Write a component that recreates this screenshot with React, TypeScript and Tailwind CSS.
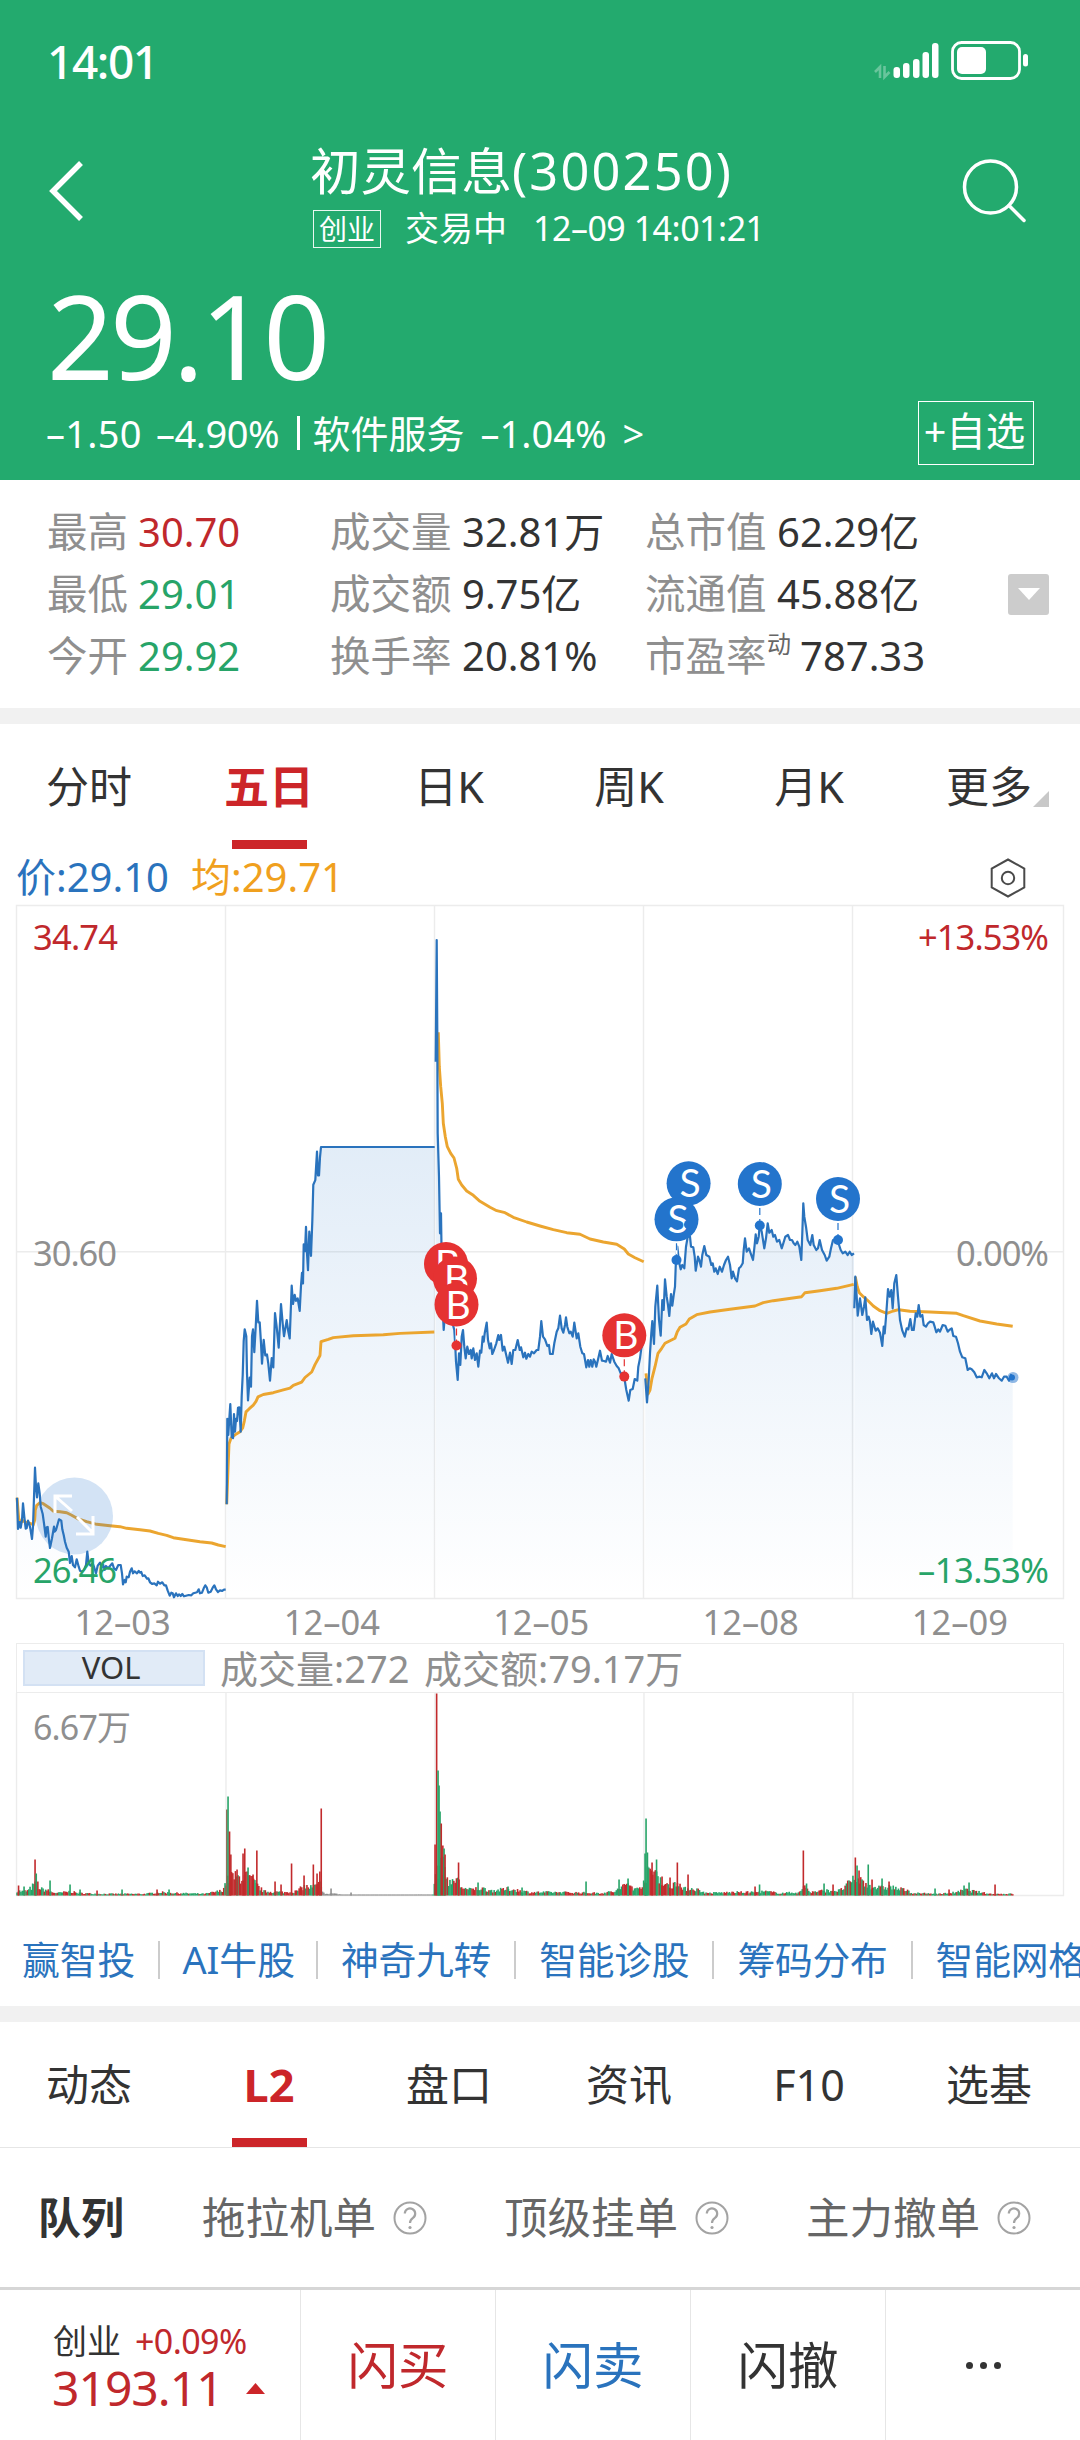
import React from 'react';

type Pt = [number, number];

/** Turns "x,y x,y" samples into page points with an origin and a scale. */
function parse(samples: string, ox: number, oy: number, sx = 3, sy = 3): Pt[] {
  return samples
    .trim()
    .split(/\s+/)
    .map((p) => {
      const [x, y] = p.split(',').map(Number);
      return [ox + x / sx, oy + y / sy] as Pt;
    });
}

const toPath = (pts: Pt[]) => 'M' + pts.map(([x, y]) => `${x.toFixed(1)} ${y.toFixed(1)}`).join('L');

const TOP = 904;
const BOTTOM = 1598.5;

const prices: Pt[][] = [
  parse(
    '51,293 54,387 59,366 62,383 66,360 69,310 73,350 77,386 80,384 84,362 88,372 91,385 96,417 99,380 105,203 108,260 111,292 115,250 119,280 122,320 128,342 132,370 137,410 140,382 143,381 147,420 150,444 156,415 162,380 164,395 168,390 173,372 177,358 184,362 187,388 191,405 195,425 200,443 206,455 210,489 215,468 219,495 225,502 230,478 236,500 240,512 246,515 252,510 258,495 262,455 266,490 272,497 278,490 283,503 288,520 293,497 300,488 305,503 310,495 314,510 318,498 324,505 330,498 337,490 342,505 348,510 355,495 362,495 366,520 369,553 374,540 377,547 380,530 386,532 390,515 395,505 399,520 404,514 411,520 416,513 420,518 424,516 428,528 434,526 441,536 445,535 450,547 457,552 463,550 470,556 474,545 480,551 487,547 493,556 498,556 503,572 509,587 514,578 518,580 522,592 528,580 533,588 537,583 542,588 547,582 552,589 558,587 566,585 574,586 580,580 586,578 591,577 596,568 600,580 606,578 611,565 616,556 620,562 625,578 632,575 638,563 643,556 648,568 654,576 660,571 666,573 672,569 677,569',
    0, 1400,
  ),
  parse(
    '680,1316 682,1130 685,1165 688,1130 691,1098 695,1170 699,1172 702,1120 705,1158 708,1130 711,1135 714,1106 718,1105 722,1158 725,1080 728,1035 731,960 734,935 739,950 741,1030 744,1090 749,1040 753,1060 756,950 759,935 763,985 767,930 771,873 775,920 779,920 783,965 786,1010 791,958 796,992 801,990 805,1010 810,1047 815,998 820,1018 825,900 830,930 836,975 843,880 849,930 852,950 860,915 865,940 869,955 875,840 879,880 884,860 888,873 893,868 899,895 903,840 906,812 909,835 911,750 915,765 918,712 921,770 924,806 928,722 933,775 937,700 940,620 946,610 951,548 954,600 957,600 960,560 963,538 1304,538',
    0, 900, 3, 2.178,
  ),
  parse(
    '47,485 50,120 52,400 53,700 57,830 60,1000 63,940 65,1080 67,1200 71,1290 75,1240 85,1230 95,1260 103,1290 106,1340 108,1385 113,1440 117,1360 121,1395 125,1310 129,1290 133,1340 137,1375 142,1340 147,1362 152,1350 155,1375 160,1345 165,1380 170,1360 175,1400 180,1352 184,1358 188,1310 191,1325 194,1300 200,1268 204,1320 209,1345 213,1330 217,1362 222,1350 229,1330 235,1305 238,1320 243,1305 248,1352 253,1340 258,1362 264,1388 270,1358 275,1392 280,1350 286,1350 293,1320 299,1350 303,1342 310,1372 315,1358 319,1376 325,1362 330,1370 335,1355 342,1360 350,1350 355,1350 360,1310 364,1263 369,1310 375,1318 382,1338 387,1335 390,1362 398,1362 403,1330 410,1295 415,1285 420,1247 425,1285 430,1298 435,1275 438,1252 442,1280 448,1300 452,1295 458,1310 463,1268 470,1315 475,1300 481,1340 487,1360 492,1362 499,1402 504,1380 508,1400 512,1380 517,1400 521,1378 525,1385 529,1400 535,1375 540,1352 546,1382 552,1383 558,1385 563,1368 570,1388 575,1362 583,1385 590,1398 596,1405 602,1420 608,1420 614,1440 619,1470 626,1502 631,1470 638,1467 644,1437 652,1442 655,1400 660,1375 664,1345 669,1330',
    420, 900,
  ),
  parse(
    '46,715 51,787 56,720 60,640 64,580 67,543 72,612 76,500 82,437 87,540 92,587 97,480 101,510 105,418 110,470 114,495 118,528 123,462 127,497 131,465 135,440 137,380 139,355 142,320 147,365 152,388 157,375 163,385 168,320 173,290 180,290 183,320 190,322 194,350 197,392 204,350 208,360 213,380 217,345 223,318 229,345 238,350 244,375 248,370 253,395 257,385 263,402 269,380 276,395 282,375 288,360 294,350 300,375 305,415 309,395 315,415 321,424 327,385 332,380 338,370 341,330 345,295 350,335 357,325 362,340 369,360 373,325 377,283 381,310 386,290 389,256 395,275 403,325 408,295 413,250 418,278 425,270 430,290 435,285 441,305 448,300 455,325 460,310 466,290 474,285 480,300 486,300 491,310 496,315 502,305 508,320 514,360 517,280 520,190 523,230 528,260 533,300 541,315 547,285 551,315 559,330 564,325 569,300 576,330 584,345 590,362 598,350 603,325 609,300 618,300 624,305 632,330 638,340 646,335 653,345 659,335 665,345 672,340',
    630, 1140,
  ),
  parse(
    '673,505 676,410 680,470 683,527 690,475 697,525 702,500 706,472 711,540 716,530 720,545 724,582 729,545 737,572 743,565 750,578 757,618 761,560 764,580 769,520 774,447 779,470 784,450 788,505 793,430 799,405 804,470 810,540 817,572 824,590 830,565 835,568 841,537 846,570 851,570 857,520 862,530 866,495 871,530 877,525 881,555 888,560 894,550 900,545 910,547 914,560 919,577 925,568 930,575 938,555 946,557 953,575 958,570 965,565 970,588 978,590 984,610 990,635 997,652 1006,655 1013,690 1019,685 1025,688 1033,697 1040,712 1049,710 1055,712 1063,690 1070,700 1078,715 1086,700 1092,715 1098,702 1107,715 1115,722 1122,710 1130,710 1137,722 1143,705 1148,712',
    630, 1140,
  ),
];

const averages: Pt[][] = [
  parse(
    '51,293 56,355 62,368 70,362 80,368 90,370 100,374 104,360 106,330 110,316 120,308 130,311 140,318 150,325 160,334 180,335 200,338 215,346 235,357 260,365 290,373 330,377 360,380 380,385 420,389 450,393 475,400 500,406 520,413 550,418 600,425 635,429 655,435 677,440',
    0, 1400,
  ),
  parse(
    '680,1316 684,1240 687,1185 693,1172 705,1165 720,1158 728,1150 733,1135 738,1115 748,1108 760,1100 768,1092 774,1082 790,1077 820,1073 850,1067 870,1063 880,1057 905,1050 915,1040 935,1028 945,1012 960,992 963,962 985,957 1000,953 1060,949 1150,947 1200,944 1303,941',
    0, 900, 3, 2.178,
  ),
  parse(
    '55,397 58,500 62,560 67,610 70,670 76,710 82,740 92,760 102,774 110,805 115,838 125,855 140,873 160,886 180,904 210,922 230,932 255,938 280,952 320,966 360,978 400,989 440,998 480,1003 510,1017 550,1026 590,1033 613,1047 625,1062 645,1073 671,1085',
    420, 900,
  ),
  parse(
    '48,700 54,762 60,750 66,715 75,680 84,640 95,625 105,610 120,602 135,595 142,575 150,562 168,552 178,537 200,524 240,516 300,508 375,498 400,488 430,482 515,470 525,458 570,452 620,445 671,433',
    630, 1140,
  ),
  parse(
    '676,410 682,440 688,458 700,470 715,483 730,498 750,512 770,520 790,513 806,509 840,514 900,516 980,520 1000,527 1050,543 1100,552 1148,559',
    630, 1140,
  ),
];

const DAY_LINES = [225.5, 434.5, 643.5, 852.5];

function Marker({ x, y, label, dotY }: { x: number; y: number; label: 'B' | 'S'; dotY?: number }) {
  const color = label === 'B' ? '#e53232' : '#2374cc';
  return (
    <g>
      {dotY !== undefined && (
        <>
          <line x1={x} x2={x} y1={y + 22} y2={dotY} stroke="#fff" strokeWidth="2" />
          <line x1={x} x2={x} y1={y + 24} y2={dotY} stroke={color} strokeWidth="1.2" strokeDasharray="7 4" />
          <circle cx={x} cy={dotY} r="5" fill={color} />
        </>
      )}
      <circle cx={x} cy={y} r="22" fill={color} />
      <text x={x + 1.5} y={y + 14} textAnchor="middle" fontSize="39" fontFamily="Lato, sans-serif" fill="#fff">
        {label}
      </text>
    </g>
  );
}

function PriceChart() {
  return (
    <svg width="1080" height="696" viewBox="0 904 1080 696" className="block">
      <defs>
        <linearGradient id="area" gradientUnits="userSpaceOnUse" x1="0" y1="940" x2="0" y2={BOTTOM}>
          <stop offset="0" stopColor="#2374c8" stopOpacity="0.18" />
          <stop offset="0.3" stopColor="#2374c8" stopOpacity="0.135" />
          <stop offset="0.7" stopColor="#2374c8" stopOpacity="0.06" />
          <stop offset="1" stopColor="#2374c8" stopOpacity="0" />
        </linearGradient>
      </defs>
      <g stroke="#ececec" strokeWidth="1.4" fill="none">
        <path d={`M16.5 ${TOP + 1.5}H1063.5V${BOTTOM}H16.5ZM16.5 1251.7H1063`} />
        {DAY_LINES.map((x) => (
          <line key={x} x1={x} x2={x} y1={TOP + 1} y2={BOTTOM} />
        ))}
      </g>
      {prices.map((p, i) => (
        <path key={i} fill="url(#area)" d={`${toPath(p)}L${p[p.length - 1][0]} ${BOTTOM}L${p[0][0]} ${BOTTOM}Z`} />
      ))}
      {averages.map((p, i) => (
        <path key={i} d={toPath(p)} fill="none" stroke="#eba52f" strokeWidth="2.9" strokeLinejoin="round" />
      ))}
      <circle cx="74.5" cy="1516" r="38.5" fill="#2374cc" fillOpacity="0.2" />
      {prices.map((p, i) => (
        <path key={i} d={toPath(p)} fill="none" stroke="#2a73bd" strokeWidth="2.2" strokeLinejoin="round" />
      ))}
      <path d="M72 1511L55 1496M55 1513V1496H72M77 1517L93 1533M93 1516V1534H76" fill="none" stroke="#fff" strokeWidth="3" />

      <g fontSize="34.5" className="font-['Noto_Sans',sans-serif]">
        <text x="33" y="949.5" fill="#c0282c" textLength="85">34.74</text>
        <text x="33" y="1266" fill="#8f8f8f" textLength="84">30.60</text>
        <text x="33" y="1583" fill="#27a468" textLength="84">26.46</text>
        <text x="918" y="949.5" fill="#c0282c" textLength="131">+13.53%</text>
        <text x="956" y="1266" fill="#8f8f8f" textLength="93">0.00%</text>
        <text x="918" y="1583" fill="#27a468" textLength="131">–13.53%</text>
      </g>

      <Marker x={446} y={1264} label="B" />
      <Marker x={455} y={1278.5} label="B" />
      <Marker x={456.5} y={1304.5} label="B" dotY={1345.5} />
      <Marker x={624.3} y={1335.3} label="B" dotY={1376.6} />
      <Marker x={688.6} y={1183.3} label="S" />
      <Marker x={676.5} y={1219.3} label="S" dotY={1260} />
      <circle cx="688.5" cy="1224.5" r="4.5" fill="#2374cc" />
      <Marker x={759.8} y={1184} label="S" dotY={1225.5} />
      <Marker x={838} y={1199} label="S" dotY={1240} />
      <circle cx="1013" cy="1377.5" r="5.5" fill="#2374cc" fillOpacity="0.5" />
      <circle cx="1012" cy="1377.5" r="3" fill="#2374cc" />
    </svg>
  );
}

const RED = '#c22a2c';
const GREEN = '#27a468';
const GRAY = '#8f8f8f';

/** Typical volume by horizontal position; single-minute spikes are listed apart. */
const envelope: Pt[] = [
  [17, 6], [22, 5], [28, 6], [34, 13], [38, 14], [40, 8], [46, 7], [52, 4], [58, 3], [70, 5], [78, 3], [100, 2], [145, 2],
  [160, 4], [175, 3], [205, 2], [222, 6], [226, 16], [231, 24], [238, 22], [246, 24], [252, 19], [258, 11], [264, 5],
  [285, 4], [296, 5], [304, 11], [312, 10], [320, 14], [322, 5], [323, 3], [335, 2], [345, 1], [433, 1], [434, 18],
  [441, 42], [444, 34], [448, 19], [453, 15], [457, 24], [460, 12], [468, 7], [480, 9], [492, 6], [510, 8], [530, 4],
  [560, 4], [600, 3], [615, 5], [628, 15], [636, 7], [642, 14], [648, 28], [657, 30], [662, 16], [670, 10], [678, 20],
  [682, 7], [688, 9], [696, 8], [706, 3], [735, 4], [755, 4], [765, 5], [780, 3], [800, 4], [805, 13], [810, 4],
  [825, 6], [840, 6], [852, 18], [860, 19], [868, 13], [880, 9], [890, 11], [898, 8], [905, 7], [912, 3], [940, 2],
  [957, 4], [965, 7], [975, 5], [990, 2], [1013, 2],
];

const spikes: [number, number, string][] = [
  [18.5, 10, RED], [24, 9, GREEN], [35, 36, RED], [36.2, 22, GREEN], [50, 15, GREEN], [70, 11, GREEN], [80, 6, GREEN], [97, 5, RED],
  [122, 6, GREEN], [157, 6, RED], [169, 6, GREEN], [226.8, 86, '#8d6b52'], [228, 99, GREEN], [229.5, 64, RED], [230.8, 41, RED],
  [237, 26, RED], [243, 42, RED], [244.7, 47, RED], [248, 28, GREEN], [253, 21, RED], [256.8, 45, RED], [275, 14, RED], [281, 11, RED],
  [291.5, 32, RED], [304, 20, RED], [313.3, 31, RED], [317, 22, RED], [319.8, 24, RED], [321.2, 87, RED], [331, 7, GRAY], [351, 3, GRAY],
  [435, 51, RED], [436.6, 202, RED], [438, 125, GREEN], [439, 110, GREEN], [440, 84, GREEN], [441.2, 72, RED], [442.8, 50, RED],
  [444, 47, GREEN], [445, 41, RED], [458.5, 33, RED], [478, 13, GREEN], [508, 9, GREEN], [522, 8, GREEN], [586, 14, GREEN],
  [619, 16, GREEN], [628, 17, GREEN], [645, 42, GREEN], [646, 77, GREEN], [647.4, 43, GREEN], [652, 33, RED], [656.5, 36, GREEN],
  [662, 19, RED], [670, 18, RED], [677.3, 33, RED], [688, 21, RED], [755, 9, RED], [759.5, 11, GREEN], [803.3, 45, RED], [806.5, 12, GREEN],
  [824, 12, GREEN], [833, 11, RED], [855.3, 38, RED], [857, 30, GREEN], [859, 25, RED], [868.2, 31, GREEN], [872, 16, RED],
  [882, 17, GREEN], [889, 14, RED], [935, 7, GREEN], [949, 6, RED], [964, 10, GREEN], [969, 13, GREEN], [995, 11, RED],
];

function volumeBars() {
  const out: { x: number; h: number; c: string }[] = [];
  let seed = 7;
  const rnd = () => (seed = (seed * 16807) % 2147483647) / 2147483647;
  let seg = 0;
  for (let x = 17; x < 1013; x += 1.3) {
    while (seg < envelope.length - 2 && envelope[seg + 1][0] < x) seg++;
    const [x0, y0] = envelope[seg];
    const [x1, y1] = envelope[seg + 1];
    const base = y0 + ((y1 - y0) * (x - x0)) / (x1 - x0);
    const h = Math.max(1, base * (0.5 + 0.6 * rnd()));
    const upBias = (x > 226 && x < 260) || (x > 647 && x < 680) ? 0.72 : 0.45;
    const c = x > 322 && x < 433 ? GRAY : rnd() < upBias ? RED : GREEN;
    out.push({ x, h, c });
  }
  spikes.forEach(([x, h, c]) => out.push({ x, h, c }));
  return out;
}

function VolumeChart() {
  return (
    <svg width="1080" height="204" viewBox="0 1693 1080 204" className="block">
      <g stroke="#ececec" strokeWidth="1.4">
        {[16.5, ...DAY_LINES.map((x) => x + 0.5), 1063.5].map((x) => (
          <line key={x} x1={x} x2={x} y1="1693" y2="1896" />
        ))}
        <line x1="16" x2="1064" y1="1895.5" y2="1895.5" />
      </g>
      {volumeBars().map((b, i) => (
        <rect key={i} x={b.x - 0.75} y={1895.5 - b.h} width="1.6" height={b.h} fill={b.c} />
      ))}
      <text x="33" y="1740" fontSize="34" fill="#8f8f8f" textLength="98" className="font-['Noto_Sans','Noto_Sans_CJK_SC',sans-serif]">
        6.67万
      </text>
    </svg>
  );
}

function StatusIcons() {
  return (
    <svg width="156" height="46" viewBox="872 38 156 46">
      <g fill="#fff">
        <g fill="none" stroke="#fff" strokeWidth="2.6" strokeOpacity="0.32">
          <path d="M875 72L880 67V78M889.500 72L884.500 77V66" />
        </g>
        <rect x="893.500" y="67" width="6.500" height="11" rx="3" />
        <rect x="903" y="63" width="6.500" height="15" rx="3" />
        <rect x="913" y="59" width="6.500" height="19" rx="3" />
        <rect x="922.500" y="52" width="6.500" height="26" rx="3" />
        <rect x="932" y="43" width="6.500" height="35" rx="3" />
        <rect x="957" y="47" width="29" height="27" rx="5" />
        <rect x="1023" y="54" width="5" height="12.500" rx="2.500" />
      </g>
      <rect x="952.500" y="42.500" width="67" height="36" rx="9" fill="none" stroke="#fff" strokeWidth="2.800" />
    </svg>
  );
}

function Help() {
  return (
    <svg width="34" height="34" viewBox="0 0 34 34" fill="none" stroke="#a3a3a3" strokeWidth="2">
      <circle cx="17" cy="17" r="15.500" />
      <path d="M11.800 12.500a5.200 5.200 0 1 1 8.200 4.300c-2 1.400-3 2.300-3 5.200" strokeWidth="2.200" />
      <circle cx="17" cy="26.500" r="1.600" fill="#a3a3a3" stroke="none" />
    </svg>
  );
}

const periodTabs = ['分时', '五日', '日K', '周K', '月K', '更多'];
const infoTabs = ['动态', 'L2', '盘口', '资讯', 'F10', '选基'];

function Tabs({ items, active, className }: { items: string[]; active: number; className: string }) {
  return (
    <nav className={`grid grid-cols-6 text-center text-[43px] text-[#333] ${className}`}>
      {items.map((t, i) => (
        <div key={t} className="relative flex items-center justify-center pr-[2px] pb-[1px]">
          {i === active ? <b className="text-[45px] font-bold text-[#cc2529]">{t}</b> : <span>{t}</span>}
          {i === active && <i className="absolute bottom-0 left-[52px] h-[9px] w-[75px] bg-[#cc2529]" />}
          {t === '更多' && (
            <svg className="absolute top-[67px] left-[133px]" width="16" height="16">
              <path d="M16 0V16H0Z" fill="#c8c8c8" />
            </svg>
          )}
        </div>
      ))}
    </nav>
  );
}

const stats = [
  ['最高', '30.70', '成交量', '32.81万', '总市值', '62.29亿'],
  ['最低', '29.01', '成交额', '9.75亿', '流通值', '45.88亿'],
  ['今开', '29.92', '换手率', '20.81%', '市盈率', '787.33'],
];

const links = ['赢智投', 'AI牛股', '神奇九转', '智能诊股', '筹码分布', '智能网格'];

export default function App() {
  return (
    <div className="flex h-[2440px] w-[1080px] flex-col overflow-hidden bg-white font-['Noto_Sans','Noto_Sans_CJK_SC',sans-serif] leading-none whitespace-nowrap">
      <header className="flex h-[480px] shrink-0 flex-col bg-[#23aa6e] text-white">
        <div className="flex h-[122px] items-center justify-between pr-[52px] pl-[47px]">
          <span className="text-[46px] font-medium tracking-[-1.400px]">14:01</span>
          <StatusIcons />
        </div>

        <div className="flex h-[136px] items-start">
          <svg className="mt-[38px] ml-[47px] shrink-0" width="38" height="62" viewBox="0 0 38 62">
            <path d="M34 3L6 31L34 59" fill="none" stroke="#fff" strokeWidth="5.500" />
          </svg>
          <div className="ml-[225px] w-[460px] shrink-0">
            <div className="mt-[23px] flex h-[52px] items-center text-[50.500px]">
              <span>初灵信息</span>
              <span className="tracking-[2.200px]">(300250)</span>
            </div>
            <div className="mt-[10px] flex h-[44px] items-center text-[34px]">
              <span className="ml-[3px] flex h-[38px] w-[68px] items-center justify-center border border-white/90 pb-[1px] text-[28px]">创业</span>
              <span className="ml-[24px] pb-[2px]">交易中</span>
              <span className="ml-[26px] pb-[2px] tracking-[-0.500px]">12–09 14:01:21</span>
            </div>
          </div>
          <svg className="mt-[34px] ml-[188px] shrink-0" width="68" height="70" viewBox="958 156 68 70">
            <g fill="none" stroke="#fff" strokeWidth="3.500">
              <circle cx="990.500" cy="187" r="26" />
              <path d="M1009 205.500L1024 220.500" strokeLinecap="round" />
            </g>
          </svg>
        </div>

        <div className="flex h-[142px] items-center pt-[11px] pl-[47px]">
          <span className="text-[117px] tracking-[-4px]">29.10</span>
        </div>

        <div className="flex h-[66px] items-center text-[38px]">
          <span className="ml-[46px] w-[110px] tracking-[0.300px]">–1.50</span>
          <span className="w-[141px] tracking-[-0.500px]">–4.90%</span>
          <i className="mr-[13px] h-[34px] w-[2.500px] bg-white" />
          <span className="w-[168px]">软件服务</span>
          <span className="w-[142px]">–1.04%</span>
          <span className="w-[295px]">&gt;</span>
          <span className="flex h-[64px] w-[116px] items-center justify-center border border-white pr-[2px] pb-[2px] text-[39.500px]">+自选</span>
        </div>
      </header>

      <section className="flex h-[228px] shrink-0 items-center">
        <div className="flex w-[1008px] shrink-0 flex-col text-[40px] text-[#333]">
          {stats.map((r, i) => (
            <div key={r[0]} className="flex h-[62px] items-center pl-[47px]">
              <span className="w-[91px] text-[40.500px] text-[#8f8f8f]">{r[0]}</span>
              <span className={`w-[192px] ${i === 0 ? 'text-[#c0282c]' : 'text-[#27a468]'}`}>{r[1]}</span>
              <span className="w-[132px] text-[40.500px] text-[#8f8f8f]">{r[2]}</span>
              <span className="w-[183px]">{r[3]}</span>
              <span className="w-[122px] text-[40.500px] text-[#8f8f8f]">{r[4]}</span>
              {i === 2 && <sup className="top-0 mb-[24px] w-[23px] text-[24px] text-[#666]">动</sup>}
              <span className="ml-[10px]">{r[5]}</span>
            </div>
          ))}
        </div>
        <div className="flex h-[41px] w-[41px] items-center justify-center rounded-[3px] bg-[#ccc]">
          <svg width="22" height="12" viewBox="0 0 22 12">
            <path d="M0 0H22L11 12Z" fill="#fff" />
          </svg>
        </div>
      </section>
      <div className="h-4 shrink-0 bg-[#f1f1f1]" />

      <Tabs items={periodTabs} active={1} className="h-[125px] shrink-0" />

      <div className="flex h-[55px] shrink-0 items-center text-[40px]">
        <span className="ml-[16px] w-[175px] text-[#2a73bd]">价:29.10</span>
        <span className="w-[795px] text-[#f0a01e]">均:29.71</span>
        <svg width="44" height="44" viewBox="0 0 44 44" fill="none" stroke="#4a4a4a" strokeWidth="2">
          <path d="M22 4.500L38.300 13.500V32.500L22 41.500L5.700 32.500V13.500Z" />
          <circle cx="22" cy="23" r="6.200" />
        </svg>
      </div>

      <PriceChart />
      <div className="flex h-[43px] shrink-0 items-center pl-[18px] text-[34.500px] text-[#8f8f8f]">
        {['12–03', '12–04', '12–05', '12–08', '12–09'].map((d) => (
          <span key={d} className="w-[209.300px] pt-px text-center">{d}</span>
        ))}
      </div>

      <div className="ml-4 flex h-[50px] w-[1048px] shrink-0 items-center border-[1.500px] border-[#ececec] text-[38px] text-[#8f8f8f]">
        <span className="ml-[6px] flex h-[36px] w-[182px] items-center justify-center border-2 border-[#d3e1f3] bg-[#e1ebf7] pr-[6px] pb-[1px] text-[31px] text-[#333]">VOL</span>
        <span className="ml-[15px] w-[204px]">成交量:272</span>
        <span>成交额:79.17万</span>
      </div>
      <VolumeChart />

      <div className="flex h-[109px] shrink-0 items-center pt-[17px] text-[37.800px] text-[#2a73bd]">
        {links.map((l, i) => (
          <React.Fragment key={l}>
            {i > 0 && <i className="h-[38px] w-[2px] shrink-0 bg-[#ccc]" />}
            <span className={`shrink-0 ${i === 0 ? 'pr-[23px] pl-[22px]' : i === 1 ? 'pr-[21px] pl-[22px]' : 'px-[23px] tracking-[-0.250px]'}`}>{l}</span>
          </React.Fragment>
        ))}
      </div>
      <div className="h-4 shrink-0 bg-[#f1f1f1]" />

      <Tabs items={infoTabs} active={1} className="h-[126px] shrink-0 border-b border-[#e6e6e6]" />

      <div className="flex h-[139px] shrink-0 items-center text-[43.500px] text-[#666]">
        <b className="ml-[38px] w-[164px] shrink-0 text-[43px] font-bold text-[#333]">队列</b>
        {['拖拉机单', '顶级挂单', '主力撤单'].map((t) => (
          <span key={t} className="flex w-[302px] shrink-0 items-center gap-[17px]">
            {t}
            <Help />
          </span>
        ))}
      </div>

      <footer className="flex flex-1 border-t-[3px] border-[#d6d6d6] text-[50.500px]">
        <div className="w-[301px] border-r border-[#e6e6e6] pl-[52px]">
          <div className="mt-[32px] flex h-[38px] items-center pl-[1px] text-[34px] text-[#333]">
            创业<span className="ml-[14px] tracking-[-0.600px] text-[#c0282c]">+0.09%</span>
          </div>
          <div className="mt-[2px] flex h-[52px] items-center text-[48px] text-[#c0282c]">
            <span className="w-[194px] tracking-[-1px]">3193.11</span>
            <svg width="19" height="11">
              <path d="M9.500 0L19 11H0Z" fill="#cc2529" />
            </svg>
          </div>
        </div>
        <div className="flex w-[195px] items-center justify-center border-r border-[#e6e6e6] text-[#c0282c]">闪买</div>
        <div className="flex w-[195px] items-center justify-center border-r border-[#e6e6e6] text-[#2a73bd]">闪卖</div>
        <div className="flex w-[195px] items-center justify-center border-r border-[#e6e6e6] text-[#333]">闪撤</div>
        <div className="flex flex-1 items-center justify-center gap-[7px]">
          {[0, 1, 2].map((k) => (
            <i key={k} className="h-[7px] w-[7px] rounded-full bg-[#333]" />
          ))}
        </div>
      </footer>
    </div>
  );
}
